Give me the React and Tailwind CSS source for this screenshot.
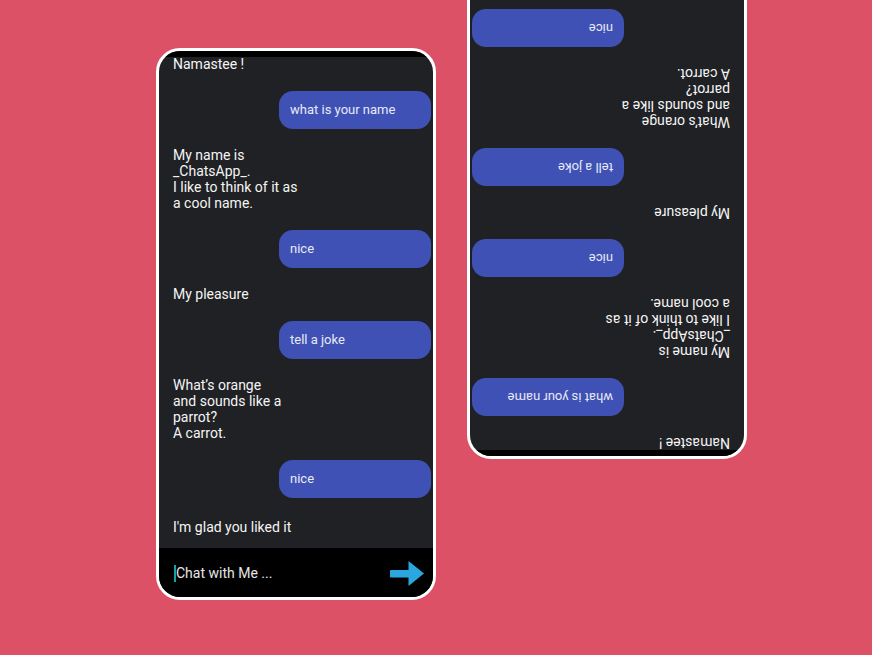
import React from 'react';

const messages = [
    { from: 'bot', lines: ['Namastee !'] },
    { from: 'me', text: 'what is your name' },
    { from: 'bot', lines: ['My name is', '_ChatsApp_.', 'I like to think of it as', 'a cool name.'] },
    { from: 'me', text: 'nice' },
    { from: 'bot', lines: ['My pleasure'] },
    { from: 'me', text: 'tell a joke' },
    { from: 'bot', lines: ['What\u2019s orange', 'and sounds like a', 'parrot?', 'A carrot.'] },
    { from: 'me', text: 'nice' },
    { from: 'bot', lines: ["I'm glad you liked it"], last: true },
];

const SendArrow = () => (
    <svg width="34" height="25" viewBox="0 0 34 25" aria-hidden>
        <rect x="0" y="9" width="21" height="7.5" rx="1" fill="#2aa7df" />
        <polygon points="18.5,0 34,12.5 18.5,25" fill="#2aa7df" />
    </svg>
);

const Phone = ({ className = '' }) => (
    <div
        className={`flex h-[552px] w-[280px] shrink-0 flex-col overflow-hidden rounded-[24px] border-[3px] border-white bg-[#202124] ${className}`}
    >
        <div className="h-[6px] shrink-0 bg-black" />
        <div className="-mt-[1px] flex flex-1 flex-col gap-[18.5px] overflow-hidden pl-[14px] pr-[2px]">
            {messages.map((m, i) =>
                m.from === 'me' ? (
                    <div
                        key={i}
                        className="flex h-[38px] w-[152px] shrink-0 items-center self-end rounded-[14px] bg-[#3f51b5] pl-[11px] text-[13px] text-[#e8eaf6]"
                    >
                        {m.text}
                    </div>
                ) : (
                    <div
                        key={i}
                        className={`shrink-0 text-[14px] leading-[16px] text-[#f5f5f5] ${m.last ? 'mt-[3px]' : ''}`}
                    >
                        {m.lines.map((l, j) => (
                            <div key={j}>{l}</div>
                        ))}
                    </div>
                )
            )}
        </div>
        <div className="flex h-[49px] shrink-0 items-center bg-black pl-[15px] pr-[9px] pt-[2px]">
            <span className="h-[17px] w-[2px] bg-[#17a2a0]" />
            <span className="flex-1 text-[14px] text-[#e6e6e6]">Chat with Me ...</span>
            <SendArrow />
        </div>
    </div>
);

export default function App() {
    return (
        <div
            className="flex h-[655px] w-full items-start overflow-hidden bg-[#dd5166] pl-[156px] pt-[48px]"
            style={{ fontFamily: 'Roboto, "Noto Sans", sans-serif' }}
        >
            <Phone />
            <Phone className="-mt-[141px] ml-[31px] rotate-180" />
        </div>
    );
}
